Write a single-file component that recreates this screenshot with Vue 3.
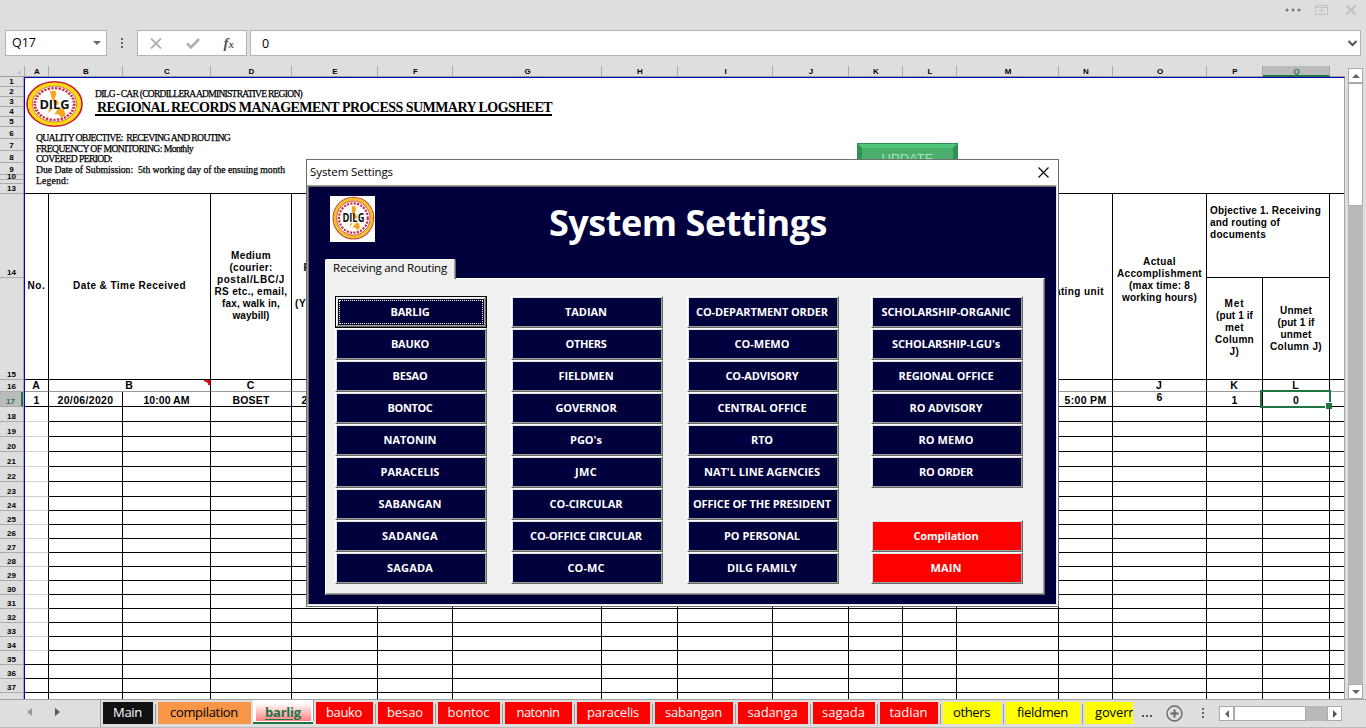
<script setup>
// Spreads the letters of a label so that it takes the given width in pixels.
const vFit = {
  mounted(el, { value }) {
    if (!value) return
    const natural = el.getBoundingClientRect().width
    const count = el.textContent.length
    el.style.letterSpacing = (value - natural) / count + 'px'
  }
}

const columns = [
  ['A', 24], ['B', 74], ['C', 88], ['D', 81], ['E', 86], ['F', 75], ['G', 149], ['H', 76], ['I', 95],
  ['J', 76], ['K', 54], ['L', 54], ['M', 102], ['N', 54], ['O', 94], ['P', 56], ['Q', 67], ['', 14]
].map(([name, width]) => ({ name, width }))
const template = columns.map(c => c.width + 'px').join(' ')

const rowHeads = [
  [1, 9], [2, 10], [3, 10], [4, 10], [5, 10], [6, 12], [7, 12], [8, 12], [9, 12], [10, 5], ['', 4], [13, 10],
  [14, 84], [15, 102], [16, 12],
  ...Array.from({ length: 7 }, (_, i) => [17 + i, 15]),
  ...Array.from({ length: 14 }, (_, i) => [24 + i, 14]),
  ['', 6]
].map(([n, h]) => ({ n, h }))
const dataRows = rowHeads.slice(16)

const meta = [
  ['QUALITY OBJECTIVE:\u00a0 RECEVING AND ROUTING', 194, 11],
  ['FREQUENCY OF MONITORING: Monthly', 157, 11],
  ['COVERED PERIOD:', 76, 10],
  ['Due Date of Submission:\u00a0 5th working day of the ensuing month', 249, 11],
  ['Legend:', 33, 11]
]

const heads = [
  { k: 'no', lines: [['No.', 18]] },
  { k: 'date', lines: [['Date & Time Received', 113]] },
  { k: 'medium', lines: [['Medium', 40], ['(courier:', 43], ['postal/LBC/J', 68], ['RS etc., email,', 73], ['fax, walk in,', 58], ['waybill)', 37]] },
  { k: 'ref', lines: [['Reference', 62], ['Number', 44], ['', 0], ['(YYYY-MM-DD)', 79]] },
  { k: 'mid', lines: [] },
  { k: 'unit', lines: [['Originating unit', 81]] },
  { k: 'actual', lines: [['Actual', 33], ['Accomplishment', 85], ['(max time: 8', 61], ['working hours)', 75], ['', 0]] },
  { k: 'objective', lines: [['Objective 1. Receiving', 111], ['and routing of', 70], ['documents', 56], ['', 0], ['', 0]] },
  { k: 'met', lines: [['Met', 20], ['(put 1 if', 37], ['met', 19], ['Column', 39], ['J)', 10]] },
  { k: 'unmet', lines: [['Unmet', 32], ['(put 1 if', 37], ['unmet', 31], ['Column J)', 52]] },
  { k: 'edge', lines: [] }
]

const letters = ['A', 'B', 'C', '', '', '', '', '', '', '', '', '', '', 'J', 'K', 'L', '']
const values = [
  ['1', 0], ['20/06/2020', 56], ['10:00 AM', 46], ['BOSET', 37], ['2020-06-001', 66], ['', 0], ['', 0], ['', 0], ['', 0],
  ['', 0], ['', 0], ['', 0], ['', 0], ['5:00 PM', 42], ['6', 0], ['1', 0], ['0', 0], ['', 0]
]

const buttonColumns = [
  [['BARLIG', 39], ['BAUKO', 38], ['BESAO', 35], ['BONTOC', 45], ['NATONIN', 53], ['PARACELIS', 59], ['SABANGAN', 63], ['SADANGA', 56], ['SAGADA', 46]],
  [['TADIAN', 42], ['OTHERS', 41], ['FIELDMEN', 55], ['GOVERNOR', 61], ["PGO's", 32], ['JMC', 22], ['CO-CIRCULAR', 73], ['CO-OFFICE CIRCULAR', 112], ['CO-MC', 37]],
  [['CO-DEPARTMENT ORDER', 132], ['CO-MEMO', 55], ['CO-ADVISORY', 73], ['CENTRAL OFFICE', 89], ['RTO', 22], ["NAT'L LINE AGENCIES", 116], ['OFFICE OF THE PRESIDENT', 138], ['PO PERSONAL', 76], ['DILG FAMILY', 70]],
  [['SCHOLARSHIP-ORGANIC', 129], ["SCHOLARSHIP-LGU's", 108], ['REGIONAL OFFICE', 95], ['RO ADVISORY', 73], ['RO MEMO', 55], ['RO ORDER', 54], ['', 0], ['Compilation', 65], ['MAIN', 31]]
]

const tabs = [
  ['Main', 50, 29, 'black'], ['compilation', 93, 68, 'orange'], ['barlig', 55, 36, 'active'], ['bauko', 57, 36, 'red'],
  ['besao', 55, 36, 'red'], ['bontoc', 62, 42, 'red'], ['natonin', 67, 43, 'red'], ['paracelis', 73, 52, 'red'],
  ['sabangan', 78, 57, 'red'], ['sadanga', 70, 50, 'red'], ['sagada', 62, 43, 'red'], ['tadian', 58, 38, 'red'],
  ['others', 58, 37, 'yellow'], ['fieldmen', 74, 51, 'yellow'], ['governor', 72, 54, 'yellow cut']
].map(([name, width, text, tone]) => ({ name, width, text, tone }))
</script>

<template>
  <div class="app">
    <div class="topbar">
      <svg class="i-dots" width="17" height="4" viewBox="0 0 17 4"><g fill="#777"><circle cx="2" cy="2" r="1.5" /><circle cx="8" cy="2" r="1.5" /><circle cx="14" cy="2" r="1.5" /></g></svg>
      <svg class="i-win" width="13" height="10" viewBox="0 0 13 10" fill="none" stroke="#c2c2c2"><path d="M.5 .5h12v9H.5zM.5 2.5h12M6.5 8.500V4M4 6l2.500-2L9 6" /></svg>
      <svg class="i-close" width="10" height="10" viewBox="0 0 10 10" stroke="#c2c2c2" stroke-width="2"><path d="M.5.5l9 9M9.500.5l-9 9" /></svg>
    </div>

    <div class="formula">
      <div class="namebox"><span v-fit="24">Q17</span><i class="tri down"></i></div>
      <div class="vdots"><i></i><i></i><i></i></div>
      <div class="fxbox">
        <svg width="12" height="11" viewBox="0 0 12 11" stroke="#b0b0b0" stroke-width="1.800" fill="none"><path d="M1 .5l10 10M11 .5l-10 10" /></svg>
        <svg width="14" height="11" viewBox="0 0 14 11" stroke="#b0b0b0" stroke-width="2.600" fill="none"><path d="M1 5.500l4 4L13 1" /></svg>
        <span class="fx">f<small>x</small></span>
      </div>
      <div class="input"><span>0</span>
        <svg width="9" height="7" viewBox="0 0 9 7" fill="none" stroke="#555" stroke-width="2"><path d="M.5 1l4 4 4-4" /></svg>
      </div>
    </div>

    <div class="sheetwrap">
      <div class="book">
        <div class="colheads">
          <div class="corner"><i></i></div>
          <div v-for="(c, i) in columns" :key="i" class="colhead" :class="{ on: c.name === 'Q', last: !c.name }" :style="{ width: c.width + 'px' }">{{ c.name }}</div>
        </div>
        <div class="rowsarea">
          <div class="rowheads">
            <div v-for="(r, i) in rowHeads" :key="i" class="rowhead" :class="{ on: r.n === 17, thin: r.n === 10 }" :style="{ height: r.h + 'px' }"><span>{{ r.n }}</span></div>
          </div>
          <div class="sheet">
            <div class="banner">
              <div class="brand">
                <svg class="seal" width="57" height="46" viewBox="0 0 100 100" preserveAspectRatio="none">
                  <circle cx="50" cy="50" r="48" fill="#fff" stroke="#c8203a" stroke-width="3.500" />
                  <circle cx="50" cy="50" r="43" fill="none" stroke="#f6dc0c" stroke-width="7" />
                  <circle cx="50" cy="50" r="39" fill="none" stroke="#d0502c" stroke-width="1.500" />
                  <circle cx="50" cy="50" r="34.500" fill="none" stroke="#cc2740" stroke-width="5" stroke-dasharray="4 2.500" />
                  <path d="M42 22l10-1 1 9-3 9 8 7-3 7-6-5-4-11zM40 62l9-5-10 13zM57 58l10 4 2 12-6 6-7-8-6 1z" fill="#f6a51c" />
                  <text x="50" y="60" text-anchor="middle" textLength="53" lengthAdjust="spacingAndGlyphs" class="sealtext">DILG</text>
                </svg>
                <div class="titles">
                  <div class="org"><span v-fit="207">DILG - CAR (CORDILLERA ADMINISTRATIVE REGION)</span></div>
                  <h1><span v-fit="455">REGIONAL RECORDS MANAGEMENT PROCESS SUMMARY LOGSHEET</span></h1>
                </div>
              </div>
              <div class="meta">
                <div v-for="m in meta" :key="m[0]" :style="{ height: m[2] + 'px', lineHeight: m[2] + 'px' }"><span v-fit="m[1]">{{ m[0] }}</span></div>
              </div>
              <div class="update">UPDATE</div>
            </div>

            <div class="heads" :style="{ gridTemplateColumns: template }">
              <div v-for="h in heads" :key="h.k" class="hcell" :class="h.k">
                <div v-for="(l, i) in h.lines" :key="i" class="line"><span v-fit="l[1]">{{ l[0] }}</span></div>
              </div>
            </div>

            <div class="letters" :style="{ gridTemplateColumns: template }">
              <div v-for="(l, i) in letters" :key="i" class="cell" :class="{ wide: i === 1, nudge: i === 2 }"><span>{{ l }}</span></div>
            </div>

            <div class="datarow first" :style="{ gridTemplateColumns: template }">
              <div v-for="(v, i) in values" :key="i" class="cell" :class="{ raised: v[0] === '6', picked: i === 16 }"><span v-fit="v[1]">{{ v[0] }}</span></div>
            </div>
            <div v-for="(r, j) in dataRows" :key="j" class="datarow" :class="{ faint: j < 17, tail: j === dataRows.length - 1 }" :style="{ height: r.h + 'px', gridTemplateColumns: template }">
              <div v-for="(c, i) in columns" :key="i" class="cell"></div>
            </div>
          </div>
        </div>
      </div>
      <div class="vscroll">
        <div class="sbtn"><i class="tri up"></i></div>
        <div class="vthumb"></div>
        <div class="sbtn bottom"><i class="tri down"></i></div>
      </div>
    </div>

    <div class="tabbar">
      <div class="nav"><i class="tri left dim"></i><i class="tri right"></i></div>
      <div class="tabs">
        <div v-for="t in tabs" :key="t.name" class="tab" :class="t.tone"><div class="fill" :style="{ width: t.width + 'px' }"><span v-fit="t.text">{{ t.name }}</span></div></div>
      </div>
      <div class="more"><i></i><i></i><i></i></div>
      <svg class="plus" width="17" height="17" viewBox="0 0 17 17" fill="none" stroke="#666"><circle cx="8.500" cy="8.500" r="7.500" stroke-width="1.300" /><path d="M8.500 4.500v8M4.500 8.500h8" stroke-width="2" /></svg>
      <div class="vdots small"><i></i><i></i><i></i></div>
      <div class="hscroll">
        <div class="sbtn"><i class="tri left"></i></div>
        <div class="hthumb"></div>
        <div class="sbtn end"><i class="tri right"></i></div>
      </div>
    </div>

    <div class="dialog">
      <div class="dtitle"><span v-fit="83">System Settings</span>
        <svg width="11" height="11" viewBox="0 0 11 11" stroke="#000" stroke-width="1.100"><path d="M.5.5l10 10M10.500.5l-10 10" /></svg>
      </div>
      <div class="dbody">
        <div class="dhead">
          <svg class="dlogo" width="45" height="46" viewBox="0 0 100 100" preserveAspectRatio="none">
            <rect width="100" height="100" fill="#fff" />
            <g transform="translate(5 1) scale(.94)">
              <circle cx="50" cy="50" r="48" fill="#fff" stroke="#c8503a" stroke-width="3" />
              <circle cx="50" cy="50" r="43.500" fill="none" stroke="#edc31b" stroke-width="6" />
              <circle cx="50" cy="50" r="39.500" fill="none" stroke="#c8302c" stroke-width="2" />
              <circle cx="50" cy="50" r="34" fill="none" stroke="#cc2740" stroke-width="5" stroke-dasharray="5 3" />
              <path d="M46 23l9-1 1 9-3 8 6 7-3 7-6-5-3-10zM42 64l7-5-7 12zM56 60l8 3 1 10-5 5-6-6-6 1z" fill="#f6a51c" />
              <text x="50" y="60" text-anchor="middle" textLength="52" lengthAdjust="spacingAndGlyphs" class="sealtext">DILG</text>
            </g>
          </svg>
          <h2><span v-fit="278">System Settings</span></h2>
        </div>
        <div class="ptab"><span v-fit="114">Receiving and Routing</span></div>
        <div class="panel">
          <div v-for="(col, i) in buttonColumns" :key="i" class="bcol">
            <template v-for="(b, j) in col" :key="j">
              <button v-if="b[0]" :class="{ focus: i === 0 && j === 0, hot: i === 3 && j > 6 }"><span v-fit="b[1]">{{ b[0] }}</span></button>
              <div v-else class="gap"></div>
            </template>
          </div>
        </div>
      </div>
    </div>
  </div>
</template>

<style>
html, body { margin: 0; overflow: hidden; }
</style>

<style scoped>
* { box-sizing: border-box; }
.app { position: relative; width: 1366px; height: 728px; background: #dedede; overflow: hidden; font-family: "Open Sans", "Noto Sans", sans-serif; color: #000; display: flex; flex-direction: column; }
span { display: inline-block; white-space: pre; }
svg { display: block; flex: none; }

.topbar { height: 30px; display: flex; justify-content: flex-end; align-items: flex-start; padding-right: 10px; }
.i-dots { margin: 8px 13px 0 0; }
.i-win { margin: 5px 18px 0 0; }
.i-close { margin-top: 5px; }

.formula { height: 26px; display: flex; font-size: 12.500px; line-height: 24px; flex: none; }
.namebox { width: 102px; margin-left: 5px; border: 1px solid #b4b4b4; background: #fff; display: flex; justify-content: space-between; align-items: center; padding: 0 5px 0 6px; }
.fxbox { width: 110px; margin-left: 13px; border: 1px solid #b4b4b4; background: #fff; display: flex; align-items: center; justify-content: space-between; padding: 0 12px 0 12px; }
.fx { font: italic bold 15px/22px "Liberation Serif", serif; color: #555; }
.fx small { font-size: 11px; }
.input { width: 1111px; margin-left: 3px; border: 1px solid #b4b4b4; background: #fff; padding: 1px 3px 0 11px; display: flex; justify-content: space-between; align-items: center; }
.vdots { width: 3px; margin-left: 14px; display: flex; flex-direction: column; justify-content: center; gap: 2px; }
.vdots i { width: 2px; height: 2px; background: #666; }

.tri { width: 0; height: 0; border: 4px solid transparent; }
.tri.down { border-top-color: #666; border-bottom: 0; }
.tri.up { border-bottom-color: #666; border-top: 0; }
.tri.left { border-right-color: #666; border-left: 0; }
.tri.right { border-left-color: #555; border-right: 0; }
.tri.dim { border-right-color: #999; }

.sheetwrap { display: flex; height: 643px; flex: none; }
.book { width: 1345px; flex: none; }
.colheads { display: flex; height: 21px; padding-top: 10px; border-bottom: 1px solid #9d9d9d; }
.corner { width: 25px; padding: 4px 0 0 17px; border-right: 1px solid #aaa; flex: none; }
.corner i { display: block; width: 0; height: 0; border-left: 4px solid transparent; border-bottom: 4px solid #bbb; }
.colhead { border-right: 1px solid #aaa; font: bold 8px/11px "Liberation Sans", sans-serif; text-align: center; padding-left: 1px; flex: none; }
.colhead.on { background: #bbb; color: #217346; border-bottom: 2px solid #217346; height: 11px; }
.colhead.last { border: 0; }

.rowsarea { display: flex; height: 622px; overflow: hidden; }
.rowheads { width: 24px; padding-top: 1px; flex: none; border-right: 1px solid #a5a5a5; }
.rowhead { border-bottom: 1px solid #aaa; display: flex; align-items: flex-end; justify-content: center; font: bold 8px/8px "Liberation Sans", sans-serif; }
.rowhead:last-child { border: 0; }
.rowhead span { width: 24px; text-align: center; }
.rowhead.thin span { line-height: 5px; height: 5px; }
.rowhead.on { background: #bbb; color: #217346; border-right: 2px solid #217346; }
.sheet { width: 1321px; background: #fff; border: solid #0000bc; border-width: 1px 0 0 1px; border-right: 1px solid #a5a5a5; font: bold 10px/12px "Liberation Sans", Arial, sans-serif; }

.banner { position: relative; height: 116px; border-bottom: 1px solid #000; font-family: "Liberation Serif", serif; font-weight: normal; }
.brand { display: flex; height: 54px; padding: 3px 0 0 1px; }
.titles { margin: 7px 0 0 12px; }
.org { height: 12px; font-size: 9.500px; line-height: 12px; -webkit-text-stroke: 0.250px #000; }
h1 { margin: 0; height: 16px; border-bottom: 2px solid #000; padding-left: 2px; font-size: 14px; line-height: 16px; white-space: nowrap; width: 457px; }
.meta { padding-left: 11px; font-size: 9.700px; -webkit-text-stroke: 0.250px #000; }
.update { position: absolute; left: 832px; top: 65px; width: 101px; height: 36px; background: #4aaf6c; border: 5px solid #2f9153; border-top-color: #4fc47a; text-align: center; color: #a9e3bd; font: 13px/18px "Liberation Sans", sans-serif; padding-top: 2px; outline: 1px solid #338c53; outline-offset: -1px; }
.sealtext { font: bold 28px "Open Sans", sans-serif; fill: #111; }

.heads { display: grid; grid-template-rows: 84px 102px; }
.hcell { grid-row: 1 / 3; border: solid #000; border-width: 0 1px 1px 0; display: flex; flex-direction: column; justify-content: center; text-align: center; overflow: hidden; padding-bottom: 1px; }
.line { height: 12px; display: flex; justify-content: center; flex: none; }
.no { grid-column: 1; }
.date { grid-column: 2 / 4; }
.medium { grid-column: 4; }
.ref { grid-column: 5; }
.mid { grid-column: 6 / 13; }
.unit { grid-column: 13 / 15; }
.unit .line { justify-content: flex-end; padding: 0 8px 0 0; margin-top: 12px; height: 12px; }
.actual { grid-column: 15; }
.objective { grid-column: 16 / 18; grid-row: 1; }
.objective .line { justify-content: flex-start; padding-left: 3px; }
.met { grid-column: 16; grid-row: 2; }
.unmet { grid-column: 17; grid-row: 2; padding-bottom: 0; }
.edge { grid-column: 18; border-right: 0; }

.letters, .datarow { display: grid; grid-template-rows: 100%; }
.cell { border: solid #000; border-width: 0 1px 1px 0; display: flex; align-items: center; justify-content: center; min-width: 0; }
.cell:last-child { border-right: 0; }
.cell span { flex: none; }
.letters { height: 12px; font-size: 10.500px; line-height: 11px; }
.letters .cell { border-bottom-color: #999; padding-right: 1px; }
.wide { grid-column: 2 / 4; background: linear-gradient(45deg, transparent 50%, #f00 50%) right top / 6px 6px no-repeat; }
.first { height: 15px; font-size: 10.500px; line-height: 11px; }
.first .cell { padding-top: 3px; }
.first .raised { padding: 0 0 4px; }
.picked { position: relative; }
.picked::before { content: ""; position: absolute; inset: -2px -2px -2px -3px; border: 2px solid #217346; }
.picked::after { content: ""; position: absolute; right: -3px; bottom: -3px; width: 6px; height: 6px; background: #217346; border: solid #fff; border-width: 1px 0 0 1px; }
.faint .cell:first-child { border-bottom-color: #d0d0d0; }
.tail .cell { border-bottom: 0; }

.vscroll { width: 15px; height: 631px; margin: 12px 0 0 3px; background: #b9b9b9; display: flex; flex-direction: column; }
.sbtn { width: 15px; height: 15px; background: #fff; border: 1px solid #aaa; display: flex; align-items: center; justify-content: center; flex: none; }
.vthumb { height: 123px; background: #fff; border: 1px solid #aaa; }
.bottom { margin-top: auto; }

.tabbar { height: 29px; border-top: 1px solid #a0a0a0; border-bottom: 1px solid #bbb; display: flex; font-size: 13px; line-height: 20px; }
.nav { width: 100px; padding: 8px 0 0 27px; display: flex; gap: 23px; flex: none; }
.nav .right { border-left-width: 5px; }
.nav .left { border-right-width: 5px; }
.tabs { display: flex; width: 1033px; overflow: hidden; border-left: 1px solid #a0a0a0; flex: none; }
.tab { padding: 2px 2px 0; position: relative; flex: none; }
.tab::after { content: ""; position: absolute; right: -1px; top: 4px; width: 1px; height: 20px; background: #999; }
.tab + .tab { padding-left: 3px; }
.fill { height: 22px; text-align: center; overflow: hidden; padding-right: 1px; }
.black .fill { background: #111; color: #fff; }
.orange .fill { background: #f79646; }
.red .fill { background: #f00; color: #fff; }
.yellow .fill { background: #ff0; }
.cut .fill { text-align: left; padding-left: 10px; }
.active { background: #fff; margin-top: -1px; border: solid #217346; border-width: 0 0 2px; height: 25px; padding-top: 4px; font-weight: bold; color: #217346; }
.active .fill { height: 18px; line-height: 18px; background: linear-gradient(#fff, #ff8080); }
.active .fill span { text-decoration: underline; text-underline-offset: 2px; }
.active::after { top: 0; height: 22px; }
.more { margin: 15px 0 0 9px; display: flex; gap: 2px; width: 12px; }
.more i { width: 2px; height: 2px; background: #555; }
.plus { margin: 5px 0 0 12px; }
.vdots.small { margin-left: 19px; height: 25px; }
.hscroll { width: 123px; height: 15px; margin: 6px 0 0 14px; background: #b9b9b9; display: flex; }
.hthumb { width: 72px; background: #fff; border: 1px solid #aaa; }
.end { margin-left: auto; }

.dialog { position: absolute; left: 306px; top: 159px; width: 753px; height: 448px; border: 1px solid #707070; background: #fff; }
.dtitle { height: 25px; display: flex; justify-content: space-between; align-items: center; padding: 0 9px 1px 3px; font-size: 11.500px; line-height: 22px; }
.dbody { height: 420px; width: 750px; border: solid #a0a0a0; border-width: 1px 1px 1px 1px; border-right-color: #e3e3e3; border-bottom-color: #e3e3e3; box-shadow: inset 1px 1px #696969; background: #00003c; padding: 0 0 0 17px; }
.dhead { height: 73px; display: flex; padding: 10px 0 0 5px; }
h2 { margin: 0 0 0 174px; font-size: 36px; line-height: 53px; color: #fff; }
.ptab { position: relative; width: 130px; height: 20px; margin-bottom: -1px; background: #f0f0f0; border: solid #fff; border-width: 1px 0 0 1px; box-shadow: inset -1px 0 #a0a0a0, 1px 0 #696969; border-radius: 2px 2px 0 0; font-size: 11.500px; line-height: 16px; padding-left: 7px; }
.panel { width: 720px; height: 317px; background: #f0f0f0; border: solid; border-color: #fff #696969 #696969 #fff; border-width: 1px; box-shadow: inset -1px -1px #a0a0a0; display: flex; padding: 17px 0 0 9px; }
.bcol { width: 152px; margin-right: 24px; }
.bcol:nth-child(3) { margin-right: 32px; }
.bcol:last-child { margin: 0; }
button { display: flex; align-items: center; justify-content: center; width: 152px; height: 32px; padding: 0 2px 1px 0; background: #00003c; color: #fff; border: 1px solid; border-color: #fff #696969 #696969 #fff; box-shadow: inset -1px -1px #a0a0a0, inset 1px 1px #e3e3e3; font: bold 11px/14px "Open Sans", sans-serif; }
.hot { background: #f00; }
.focus { border-color: #000; box-shadow: inset -1px -1px #696969, inset 1px 1px #fff, inset -2px -2px #a0a0a0, inset 2px 2px #e3e3e3; position: relative; }
.focus::after { content: ""; position: absolute; inset: 3px; border: 1px dotted #ffffc3; }
.gap { height: 32px; }
</style>
